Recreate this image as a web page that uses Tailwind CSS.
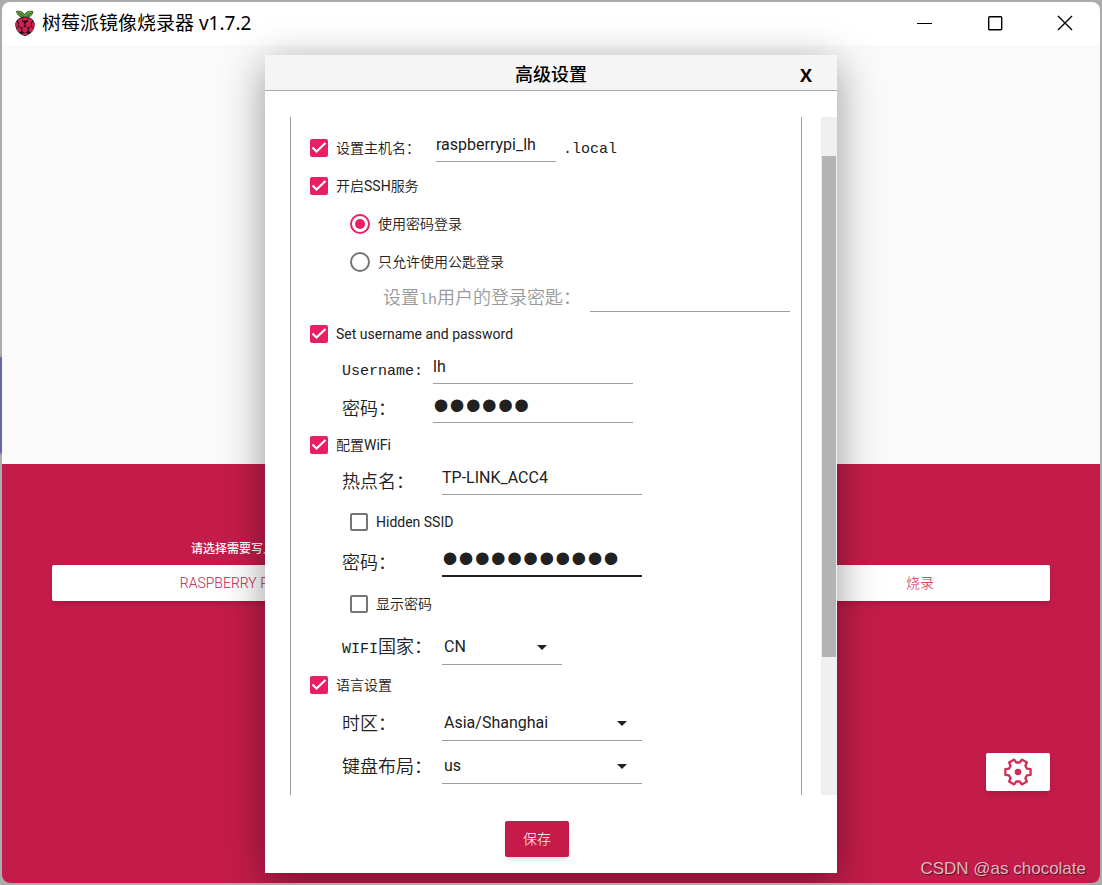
<!DOCTYPE html>
<html lang="zh-CN">
<head>
<meta charset="utf-8">
<title>树莓派镜像烧录器 v1.7.2</title>
<script src="https://cdn.jsdelivr.net/npm/@tailwindcss/browser@4"></script>
</head>
<body class="h-screen min-h-[885px] p-[2px] bg-[#a9abac] bg-[linear-gradient(to_bottom,#a9abac_356px,#6464ac_358px,#6464ac_452px,#a9abac_455px)] bg-[length:2px_100%] bg-no-repeat font-['Roboto','Noto_Sans_CJK_SC',sans-serif] text-[#212121]">
<svg class="hidden" aria-hidden="true">
  <symbol id="tick" viewBox="0 0 18 18"><path d="M2.500 8.500l4 4L15.500 4" fill="none" stroke="#fff" stroke-width="2.200"/></symbol>
  <symbol id="arrow" viewBox="0 0 10 5"><path d="M0 0h10l-5 5z" fill="#212121"/></symbol>
</svg>
<div class="flex h-full flex-col overflow-hidden rounded-lg bg-white">

  <header class="flex h-[43px] shrink-0 items-center pb-0.5 pl-3">
    <svg class="h-[26px] w-[22px]" viewBox="0 0 22 26" aria-hidden="true">
      <path d="M11 7C9 6 5 8 3 10c-2 3-2 5-1 8 1 4 5 7 9 8 4-1 8-4 9-8 1-3 1-5-1-8-2-2-6-4-8-3z" fill="#111"/>
      <path d="M10.500 6.500C8 7.500 4 7 2.500 1.500 5 .8 9 1.500 10.500 5 12 1.500 16 .8 19 1.500 18 7 14 7.500 11.500 6.500z" fill="#62a83f" stroke="#173a12" stroke-width=".8"/>
      <path d="M4.500 3l5 3M17.500 3l-5 3" stroke="#173a12" stroke-width=".7"/>
      <g fill="#d01f50"><ellipse cx="11" cy="9" rx="2.900" ry="1.700"/><ellipse cx="6.200" cy="10.500" rx="2.500" ry="2" transform="rotate(-35 6.200 10.500)"/><ellipse cx="15.800" cy="10.500" rx="2.500" ry="2" transform="rotate(35 15.800 10.500)"/><circle cx="7.600" cy="14.600" r="2.900"/><circle cx="14.400" cy="14.600" r="2.900"/><ellipse cx="2.700" cy="14.500" rx="1.500" ry="2.700"/><ellipse cx="19.300" cy="14.500" rx="1.500" ry="2.700"/><circle cx="11" cy="19.600" r="2.800"/><ellipse cx="5" cy="19.500" rx="2.200" ry="2.600" transform="rotate(-30 5 19.500)"/><ellipse cx="17" cy="19.500" rx="2.200" ry="2.600" transform="rotate(30 17 19.500)"/><ellipse cx="11" cy="24" rx="2.800" ry="1.300"/></g>
    </svg>
    <h1 class="ml-1.5 flex-1 font-['Noto_Sans','Noto_Sans_CJK_SC',sans-serif] text-[19px] leading-6 text-black">树莓派镜像烧录器 v1.7.2</h1>
    <div class="flex text-black">
      <button class="grid h-10 w-[70px] place-items-center" aria-label="最小化"><svg class="size-4" viewBox="0 0 16 16"><path d="M0 8.500h15" stroke="currentColor"/></svg></button>
      <button class="grid h-10 w-[70px] place-items-center" aria-label="最大化"><svg class="size-4" viewBox="0 0 16 16"><rect x="1.700" y="1.700" width="13" height="13" rx="1" fill="none" stroke="currentColor" stroke-width="1.400"/></svg></button>
      <button class="grid h-10 w-[70px] place-items-center" aria-label="关闭"><svg class="size-4" viewBox="0 0 16 16"><path d="M1 1l14 14M15 1L1 15" stroke="currentColor" stroke-width="1.400"/></svg></button>
    </div>
  </header>

  <main class="relative flex flex-1 flex-col">
    <div class="h-1/2 bg-[#fafafa]"></div>
    <section class="flex flex-1 flex-col bg-[#c31c4a] px-[50px] pt-[77px]">
      <div class="grid grid-cols-[422fr_316fr_260fr]">
        <div class="flex flex-col">
          <p class="h-6 text-center text-xs font-medium leading-4 text-white">请选择需要写入的操作系统</p>
          <button class="h-9 rounded-xs bg-white text-sm font-light text-[#c31c4a] shadow-md">RASPBERRY PI OS (32-BIT)</button>
        </div>
        <div></div>
        <button class="mt-6 h-9 rounded-xs bg-white text-sm font-light text-[#c31c4a] shadow-md">烧录</button>
      </div>
      <button class="mt-[152px] grid h-[38px] w-16 place-items-center self-end rounded-xs bg-white shadow-md" aria-label="高级设置">
        <svg class="size-7" viewBox="0 0 28 28"><path d="M23 10.700 26.600 11.100V16.900L23 17.300 21.400 20.200 22.900 23.500 17.800 26.400 15.700 23.500H12.300L10.200 26.400 5.100 23.500 6.600 20.200 5 17.300 1.400 16.900V11.100L5 10.700 6.600 7.800 5.100 4.500 10.200 1.600 12.300 4.500H15.700L17.800 1.600 22.900 4.500 21.400 7.800z" fill="none" stroke="#d22d57" stroke-width="2.300" stroke-linejoin="round"/><circle cx="14" cy="14" r="3.300" fill="#d22d57"/></svg>
      </button>
      <p class="-mr-9 mt-auto mb-0.5 self-end font-['Liberation_Sans',sans-serif] text-[17px] leading-6 text-white/70 [text-shadow:1px_1px_1px_#0008]">CSDN @as chocolate</p>
    </section>

    <div role="dialog" aria-labelledby="dlg" class="absolute inset-x-0 inset-y-[10px] mx-auto flex w-[572px] max-w-full flex-col bg-white shadow-[0_10px_40px_rgba(0,0,0,0.4)]">
      <div class="grid h-9 shrink-0 grid-cols-[60px_1fr_60px] items-center border-b border-[#a8a8a8] bg-[#f5f5f5] pt-1 text-black">
        <h2 id="dlg" class="col-start-2 pt-px text-center text-lg font-medium leading-6">高级设置</h2>
        <button class="pr-0.5 font-['Open_Sans',sans-serif] text-lg font-bold leading-6" aria-label="关闭对话框">X</button>
      </div>

      <div class="mt-[26px] flex min-h-0 flex-1 pl-[25px]">
        <form class="flex-1 overflow-hidden border-x border-[#9e9e9e] pt-3 pl-[19px] text-sm">
          <div class="flex h-[38px] items-center">
            <label class="flex w-[126px] items-center gap-2 font-[350]"><span class="grid size-[18px] shrink-0"><input type="checkbox" checked class="col-start-1 row-start-1 appearance-none rounded-xs bg-[#e91e63]"><svg class="pointer-events-none col-start-1 row-start-1 size-[18px]"><use href="#tick"/></svg></span>设置主机名：</label>
            <input aria-label="主机名" value="raspberrypi_lh" class="h-7 w-[120px] border-b border-[#9e9e9e] pb-[7px] text-base">
            <span class="ml-[7px] pt-1 font-['Liberation_Mono',monospace] text-[15px]">.local</span>
          </div>
          <label class="flex h-[38px] items-center gap-2 font-[350]"><span class="grid size-[18px] shrink-0"><input type="checkbox" checked class="col-start-1 row-start-1 appearance-none rounded-xs bg-[#e91e63]"><svg class="pointer-events-none col-start-1 row-start-1 size-[18px]"><use href="#tick"/></svg></span><span>开启<span class="font-normal">SSH</span>服务</span></label>
          <label class="flex h-[38px] items-center gap-2 pl-10 font-[350]"><input type="radio" name="auth" checked class="size-5 appearance-none rounded-full border-2 border-[#e91e63] bg-[#e91e63] bg-clip-content p-[3px]">使用密码登录</label>
          <label class="flex h-[38px] items-center gap-2 pl-10 font-[350]"><input type="radio" name="auth" class="size-5 appearance-none rounded-full border-2 border-[#757575]">只允许使用公匙登录</label>
          <div class="flex h-9 items-center pl-[73px]">
            <label for="key" class="w-[207px] text-lg font-[350] leading-6 text-[#999]">设置<span class="font-['Liberation_Mono',monospace] text-[15px]">lh</span>用户的登录密匙：</label>
            <input id="key" class="h-[26px] w-[200px] border-b border-[#9e9e9e] pb-2 text-base">
          </div>
          <label class="flex h-[34px] items-center gap-2"><span class="grid size-[18px] shrink-0"><input type="checkbox" checked class="col-start-1 row-start-1 appearance-none rounded-xs bg-[#e91e63]"><svg class="pointer-events-none col-start-1 row-start-1 size-[18px]"><use href="#tick"/></svg></span>Set username and password</label>
          <div class="flex h-10 items-center pl-8">
            <label for="user" class="w-[91px] pt-0.5 font-['Liberation_Mono',monospace] text-[15px] leading-6">Username:</label>
            <input id="user" value="lh" class="h-[26px] w-[200px] border-b border-[#9e9e9e] pb-2 text-base">
          </div>
          <div class="flex h-9 items-center pl-8">
            <label for="pw" class="w-[91px] text-lg font-[350] leading-6">密码：</label>
            <input id="pw" type="password" value="123456" class="h-7 w-[200px] border-b border-[#9e9e9e] pb-2 font-['Liberation_Sans',sans-serif] text-[46px] leading-5">
          </div>
          <label class="flex h-9 items-center gap-2 font-[350]"><span class="grid size-[18px] shrink-0"><input type="checkbox" checked class="col-start-1 row-start-1 appearance-none rounded-xs bg-[#e91e63]"><svg class="pointer-events-none col-start-1 row-start-1 size-[18px]"><use href="#tick"/></svg></span><span>配置<span class="font-normal">WiFi</span></span></label>
          <div class="flex h-[38px] items-center pl-8">
            <label for="ssid" class="w-[100px] text-lg font-[350] leading-6">热点名：</label>
            <input id="ssid" value="TP-LINK_ACC4" class="h-[26px] w-[200px] border-b border-[#9e9e9e] pb-2 text-base">
          </div>
          <label class="flex h-10 items-center gap-2 pt-0.5 pl-10"><input type="checkbox" class="size-[18px] appearance-none rounded-xs border-2 border-[#757575]">Hidden SSID</label>
          <div class="flex h-11 items-center pl-8">
            <label for="wpw" class="w-[100px] text-lg font-[350] leading-6">密码：</label>
            <input id="wpw" type="password" value="12345678901" class="h-7 w-[200px] border-b-2 border-[#212121] pb-2 font-['Liberation_Sans',sans-serif] text-[46px] leading-5">
          </div>
          <label class="flex h-[38px] items-center gap-2 pl-10 font-[350]"><input type="checkbox" class="size-[18px] appearance-none rounded-xs border-2 border-[#757575]">显示密码</label>
          <div class="flex h-12 items-center pl-8">
            <label for="country" class="w-[100px] pt-0.5 text-lg font-[350] leading-6"><span class="font-['Liberation_Mono',monospace] text-[15px]">WIFI</span>国家：</label>
            <div class="grid"><select id="country" class="col-start-1 row-start-1 h-[35px] w-[120px] appearance-none border-b border-[#9e9e9e] pt-px pl-0.5 text-base"><option>CN</option></select><svg class="pointer-events-none col-start-1 row-start-1 mr-[15px] h-[5px] w-2.5 self-center justify-self-end"><use href="#arrow"/></svg></div>
          </div>
          <label class="flex h-7 items-center gap-2 font-[350]"><span class="grid size-[18px] shrink-0"><input type="checkbox" checked class="col-start-1 row-start-1 appearance-none rounded-xs bg-[#e91e63]"><svg class="pointer-events-none col-start-1 row-start-1 size-[18px]"><use href="#tick"/></svg></span>语言设置</label>
          <div class="flex h-12 items-center pl-8">
            <label for="tz" class="w-[100px] pt-0.5 text-lg font-[350] leading-6">时区：</label>
            <div class="grid"><select id="tz" class="col-start-1 row-start-1 h-[35px] w-[200px] appearance-none border-b border-[#9e9e9e] pt-px pl-0.5 text-base"><option>Asia/Shanghai</option></select><svg class="pointer-events-none col-start-1 row-start-1 mr-[15px] h-[5px] w-2.5 self-center justify-self-end"><use href="#arrow"/></svg></div>
          </div>
          <div class="flex h-[38px] items-center pl-8">
            <label for="kb" class="w-[100px] pt-0.5 text-lg font-[350] leading-6">键盘布局：</label>
            <div class="grid"><select id="kb" class="col-start-1 row-start-1 h-[35px] w-[200px] appearance-none border-b border-[#9e9e9e] pt-px pl-0.5 text-base"><option>us</option></select><svg class="pointer-events-none col-start-1 row-start-1 mr-[15px] h-[5px] w-2.5 self-center justify-self-end"><use href="#arrow"/></svg></div>
          </div>
        </form>
        <div class="ml-[19px] w-4 bg-[#f0f0f0] px-px pt-[39px]"><div class="h-[501px] bg-[#b3b3b3]"></div></div>
      </div>

      <div class="flex shrink-0 justify-center pt-[26px] pb-4 pr-7">
        <button class="h-9 w-16 rounded-xs bg-[#c51a4a] text-sm font-light text-white shadow-md">保存</button>
      </div>
    </div>
  </main>
</div>
</body>
</html>
